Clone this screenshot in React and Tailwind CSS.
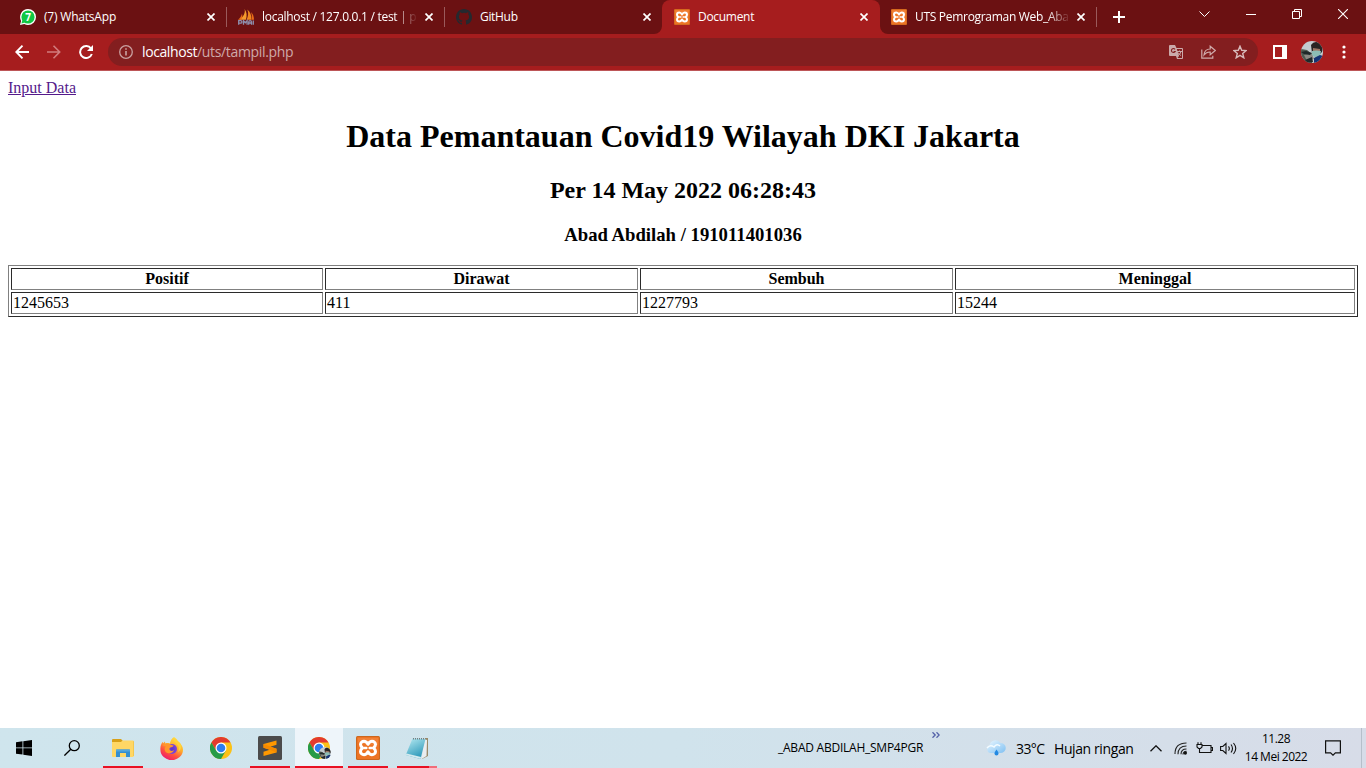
import React from "react";

const ui = "font-['Open_Sans','Noto_Sans',sans-serif]";

function Close() {
  return (
    <svg className="size-2 shrink-0" viewBox="0 0 8 8" fill="none" stroke="#fff" strokeWidth="1.7">
      <path d="M.5 .5l7 7M7.5 .5l-7 7" />
    </svg>
  );
}

function WhatsApp() {
  return (
    <svg className="size-4 shrink-0" viewBox="0 0 16 16">
      <path d="M8 0a8 8 0 0 1 0 16a8 8 0 0 1-3.7-.9L0 16l1.1-4.1A8 8 0 0 1 8 0z" fill="#fff" />
      <circle cx="8" cy="8" r="6.6" fill="#10c843" />
      <path d="M1.4 14.6l1-3.5 2.5 2.5z" fill="#10c843" />
      <text x="8" y="11.6" fontSize="10" fontWeight="700" textAnchor="middle" fill="#fff" fontFamily="Open Sans, sans-serif">7</text>
    </svg>
  );
}

function PhpMyAdmin() {
  return (
    <svg className="size-4 shrink-0" viewBox="0 0 16 16">
      <path d="M6.600 0C7.500 4 5.500 7.500 1.500 10.800H7.800C9.300 7 8.800 3 6.600 0z" fill="#f59b2c" />
      <path d="M9.300 .5c1.500 3.500.9 6.800-.8 10.300H13.200C13.800 6.500 12.300 3 9.300.5z" fill="#ef8820" />
      <path d="M12.800 3c1.300 2.400 1.200 5 .5 7.800H16c0-3-1-6.300-3.200-7.800zM4 4.500C3.500 7 2 9.500 0 10.800h2.800C4.300 9 4.700 7 4 4.500z" fill="#e96b18" />
      <path d="M.7 15.700v-4h2q1.200 0 1.200 1.200T2.700 14.200H1M5.500 15.700v-4l1.800 2 1.800-2v4M10.700 15.700v-2.500q0-1.500 1.400-1.500t1.400 1.500v2.500M10.700 14h2.800M15.300 11.500v4.200" fill="none" stroke="#8e90ae" strokeWidth="1.300" />
    </svg>
  );
}

function GitHub() {
  return (
    <svg className="size-4 shrink-0" viewBox="0 0 16 16" fill="#24292f">
      <path d="M8 0C3.580 0 0 3.580 0 8c0 3.540 2.290 6.530 5.470 7.590.4.070.550-.170.550-.380 0-.190-.010-.820-.010-1.490-2.010.370-2.530-.490-2.690-.940-.090-.230-.480-.940-.820-1.130-.280-.150-.680-.520-.010-.530.630-.010 1.080.580 1.230.820.720 1.210 1.870.870 2.330.660.070-.520.280-.870.510-1.070-1.780-.2-3.640-.890-3.640-3.950 0-.870.310-1.590.820-2.150-.080-.2-.360-1.020.080-2.120 0 0 .670-.210 2.200.820a7.600 7.600 0 0 1 4 0c1.530-1.040 2.200-.820 2.200-.820.440 1.100.160 1.920.080 2.120.510.560.820 1.270.820 2.150 0 3.070-1.870 3.750-3.650 3.950.290.250.540.730.540 1.480 0 1.070-.010 1.930-.010 2.200 0 .210.150.460.550.380A8.010 8.010 0 0 0 16 8c0-4.420-3.580-8-8-8z" />
    </svg>
  );
}

function Xampp({ size = "size-4" }) {
  return (
    <svg className={`${size} shrink-0`} viewBox="0 0 24 24">
      <rect width="24" height="24" rx="1.500" fill="#cc671d" />
      <rect x="1" y="1" width="22" height="22" rx="1" fill="#ed7424" />
      <path d="M2 2h20v7Q12 10 2 6z" fill="#f48a43" opacity=".6" />
      <g fill="none" stroke="#fff" strokeWidth="3" strokeLinejoin="round" strokeLinecap="round">
        <path d="M12 8.300C10.700 6 9.500 5.300 8 5.300c-2 0-3.500 1.400-3.500 3.300 0 1.500.9 2.500 2.100 3.400-1.200.9-2.100 1.900-2.100 3.400 0 1.900 1.500 3.300 3.500 3.300 1.500 0 2.700-.7 4-3 1.300 2.300 2.500 3 4 3 2 0 3.500-1.400 3.500-3.300 0-1.500-.9-2.500-2.100-3.400 1.200-.9 2.100-1.900 2.100-3.400 0-1.900-1.500-3.300-3.500-3.300-1.500 0-2.700.7-4 3z" />
        <path d="M8.500 12h1.800M13.700 12h1.800" strokeWidth="2.500" />
      </g>
    </svg>
  );
}

function Tab({ icon, children, active, sep, fade, tracking = "tracking-[-0.3px]", width = "w-[218px]", pad = "pl-3", closeGap = "ml-2" }) {
  return (
    <div className={`relative flex h-[34px] shrink-0 items-center ${pad} ${width} ${active ? "rounded-t-lg bg-[#a61d1e]" : ""}`}>
      {icon}
      <div className={`ml-2 w-[155px] shrink-0 overflow-hidden whitespace-nowrap text-[12px] leading-5 text-white ${tracking} ${fade ? "[mask-image:linear-gradient(to_right,#000_132px,transparent_156px)]" : ""}`}>
        {children}
      </div>
      <div className={`flex ${closeGap}`}><Close /></div>
      {sep && <div className={`absolute top-[7px] h-5 w-px bg-[#9a5a5b] ${width === "w-[217px]" ? "right-0" : "right-[-1px]"}`} />}
      {active && (
        <>
          <svg className="absolute bottom-0 -left-2 size-2" viewBox="0 0 8 8"><path d="M8 0v8H0a8 8 0 0 0 8-8z" fill="#a61d1e" /></svg>
          <svg className="absolute bottom-0 -right-2 size-2" viewBox="0 0 8 8"><path d="M0 0v8h8a8 8 0 0 1-8-8z" fill="#a61d1e" /></svg>
        </>
      )}
    </div>
  );
}

function Avatar({ className }) {
  return (
    <svg className={className} viewBox="0 0 22 22">
      <defs><clipPath id="avatar"><circle cx="11" cy="11" r="11" /></clipPath></defs>
      <g clipPath="url(#avatar)">
        <path fill="#c3ccd0" d="M0 0h22v22H0z" />
        <path fill="#4f594f" d="M0 8l6 1 5 4v9H0z" />
        <path fill="#8b8983" d="M3 14l8-2 2 6-7 2z" />
        <path fill="#282323" d="M10 4q3-5 9-2 4 3 2 9l-3 3-7-2z" />
        <path fill="#9d7564" d="M12 7l7 1v5l-7 1z" />
        <path fill="#8cbdb5" d="M11 10q4-1 9 0l-1 5-4 2-4-3z" />
        <path fill="#153474" d="M13 17l6-3 3 1v7h-9z" />
        <path fill="#202829" d="M0 11l5-1 6 2-2 2-6-1zM4 19l7-3 1 5-6 1z" />
      </g>
    </svg>
  );
}

function Chrome() {
  return (
    <svg className="size-[22px]" viewBox="0 0 22 22">
      <circle cx="11" cy="11" r="11" fill="#fbc116" />
      <path d="M11 5.500h9.530A11 11 0 0 0 1.470 5.500L6.200 13.700z" fill="#e33b2e" />
      <path d="M1.470 5.500A11 11 0 0 0 11 22l4.760-8.250L11 11l-4.760 2.750z" fill="#269b48" />
      <circle cx="11" cy="11" r="5.500" fill="#fff" />
      <circle cx="11" cy="11" r="4.300" fill="#2d7df0" />
    </svg>
  );
}

function Firefox() {
  return (
    <svg className="size-[23px]" viewBox="0 0 23 23">
      <defs>
        <linearGradient id="fire" x1=".8" y1="0" x2=".25" y2="1">
          <stop offset="0" stopColor="#ffe84a" /><stop offset=".4" stopColor="#ffb02c" />
          <stop offset=".7" stopColor="#ff5040" /><stop offset="1" stopColor="#ec1670" />
        </linearGradient>
        <radialGradient id="globe"><stop offset="0" stopColor="#5b35c8" /><stop offset="1" stopColor="#8046d9" /></radialGradient>
      </defs>
      <path d="M14 0c2 1 3.500 3 4 4.500l1.500 1.200c2 1.800 3.500 4.500 3.500 7A11.300 10.500 0 0 1 .4 12.700C.2 9.500 1 7 2.700 4.800l.4 1.500L5 4.500l.3 2c1.600-.6 3.100-.6 4.600 0C10.500 3.800 11.500 1.500 14 0z" fill="url(#fire)" />
      <circle cx="12" cy="12" r="5" fill="url(#globe)" />
      <path d="M2.500 8.300c3-2.500 6.500-1.500 8.300-.5 1 .5 2 .5 2.700.6-.5 1.600-2 1.500-3.200 2.200-.8.500-1 1.200-.8 2 .6 1.600 2.500 1.700 4.600.4-1.500 4-7 4.200-8.900 1.200C4 12.300 5 10 6 9.500z" fill="#ff972b" />
      <path d="M13.500 1.500c-.5 3 3.500 4.500 4.800 7.500 1 2.500.6 5-.5 6.500 5-3.500 3.800-8.500 1-10.700z" fill="#ffd43a" />
    </svg>
  );
}

function Task({ children, width = "w-[49px]", line, active }) {
  return (
    <div className={`relative flex h-10 shrink-0 items-center justify-center ${width} ${active ? "bg-[#eef5fa]" : ""}`}>
      {children}
      {line && <div className={`absolute bottom-0 h-0.5 bg-[#e81123] ${active ? "w-full" : "w-10"}`} />}
    </div>
  );
}

function Browser() {
  return (
    <header className="shrink-0">
      <div className="flex h-[34px] bg-[#6b1112] pl-2">
        <Tab icon={<WhatsApp />} sep tracking="tracking-[-0.2px]">(7) WhatsApp</Tab>
        <Tab icon={<PhpMyAdmin />} sep fade tracking="tracking-[-0.28px]">localhost / 127.0.0.1 / test | ph</Tab>
        <Tab icon={<GitHub />} tracking="tracking-[-0.32px]">GitHub</Tab>
        <Tab icon={<Xampp />} active closeGap="ml-[7px]">Document</Tab>
        <Tab icon={<Xampp />} sep fade width="w-[217px]" pad="pl-[11px]" closeGap="ml-[7px]">UTS Pemrograman Web_Aba</Tab>
        <svg className="ml-4 mt-[11px] size-3 shrink-0" viewBox="0 0 12 12" stroke="#fff" strokeWidth="2"><path d="M6 0v12M0 6h12" /></svg>
        <div className="ml-auto flex h-[28px] items-center pr-[18px]">
          <svg className="mr-[36px] h-[6px] w-[11px]" viewBox="0 0 11 6" fill="none" stroke="#fff"><path d="M.5 .5l5 5 5-5" /></svg>
          <svg className="mr-[36px] h-px w-[10px]" viewBox="0 0 10 1"><path fill="#fff" d="M0 0h10v1H0z" /></svg>
          <svg className="mr-[36px] size-[10px]" viewBox="0 0 10 10" fill="none" stroke="#fff"><path d="M.5 2.500h7v7h-7zM2.500 2.500v-2h7v7h-2" /></svg>
          <svg className="size-[10px]" viewBox="0 0 10 10" fill="none" stroke="#fff" strokeWidth="1.100"><path d="M0 0l10 10M10 0L0 10" /></svg>
        </div>
      </div>
      <div className="flex h-[37px] items-center border-b border-[#bd5658] bg-[#a61d1e] pl-[15px]">
        <svg className="h-[14px] w-[14px]" viewBox="0 0 14 14" fill="none" stroke="#fff" strokeWidth="1.900"><path d="M14 7H1.500M7.500 .7L1.300 7l6.200 6.300" /></svg>
        <svg className="ml-[18px] h-[14px] w-[14px]" viewBox="0 0 14 14" fill="none" stroke="#d17c7d" strokeWidth="1.600"><path d="M0 7h12.500M6.500 .7L12.700 7l-6.200 6.300" /></svg>
        <svg className="ml-[18px] size-[14px]" viewBox="0 0 14 14"><path d="M12 3.500A6 6 0 1 0 12.800 9" fill="none" stroke="#fff" strokeWidth="2" /><path d="M14 0v6H8z" fill="#fff" /></svg>
        <div className="ml-[15px] flex h-7 w-[1150px] items-center rounded-full bg-[#831e1f] pl-[11px] pr-[11px]">
          <svg className="size-[14px]" viewBox="0 0 14 14"><circle cx="7" cy="7" r="6.300" fill="none" stroke="#c9a0a0" strokeWidth="1.300" /><path d="M6.300 6h1.400v4.500H6.300zM6.300 3.300h1.400v1.400H6.300z" fill="#d5b4b4" /></svg>
          <span className="ml-[9px] text-[14px] leading-5 tracking-[-0.4px] text-white">localhost<span className="tracking-[-0.34px] text-[#cfa9a9]">/uts/tampil.php</span></span>
          <svg className="ml-auto h-[14px] w-[14px]" viewBox="0 0 14 14">
            <path d="M1 0h5l1.500 3H13q1 0 1 1v9q0 1-1 1H8l-1-3H1q-1 0-1-1V1q0-1 1-1z" fill="#cbaaaa" />
            <path d="M7.800 4H13v9H8.500L10 11z" fill="#831e1f" />
            <path d="M6 4.300a2 2 0 1 0 .2 2.200H4.600" fill="none" stroke="#831e1f" strokeWidth="1.100" />
            <path d="M8 6.500h5M10.500 5.500v1M12 6.500q-.8 3-3 4M9 7.500q1.500 2.500 3 3" fill="none" stroke="#cbaaaa" />
          </svg>
          <svg className="ml-[18px] h-[14px] w-[15px]" viewBox="0 0 15 14" fill="none" stroke="#d0aaaa" strokeWidth="1.200"><path d="M.8 4.500v8.700h11v-2.500M3 10Q3.500 4 9.200 4V1.200L14.300 5.500 9.200 9.800V7Q5.500 6.800 3 10z" /></svg>
          <svg className="ml-[17px] size-[14px]" viewBox="0 0 14 14" fill="none" stroke="#d8baba" strokeWidth="1.400"><path d="M7 1.200l1.700 4.100 4.400.3-3.400 2.900 1.100 4.300L7 10.400l-3.800 2.400 1.100-4.300L.9 5.600l4.400-.3z" /></svg>
        </div>
        <svg className="ml-[15px] h-[14px] w-[14px]" viewBox="0 0 14 14"><path fill="#fff" fillRule="evenodd" d="M0 0h14v14H0zM2 2v10h7V2z" /></svg>
        <Avatar className="ml-[14px] size-[22px]" />
        <svg className="ml-[19px] h-[14px] w-[4px]" viewBox="0 0 4 14" fill="#fff"><circle cx="2" cy="2" r="1.600" /><circle cx="2" cy="7" r="1.600" /><circle cx="2" cy="12" r="1.600" /></svg>
      </div>
    </header>
  );
}

function Page() {
  const cell = "h-[22px] border border-t-[#2b2b2b] border-l-[#2b2b2b] border-r-[#808080] border-b-[#808080] p-px leading-[18px]";
  return (
    <main className="flex-1 bg-white px-2 pt-2 font-['Liberation_Serif','Times_New_Roman',serif] text-[16px] leading-[18px] text-black">
      <a href="#" className="block w-fit text-[#551a8b] underline">Input Data</a>
      <h1 className="mt-[21px] text-center text-[32px] font-bold leading-[37px]">Data Pemantauan Covid19 Wilayah DKI Jakarta</h1>
      <h2 className="mt-[22px] text-center text-[24px] font-bold leading-[27px]">Per 14 May 2022 06:28:43</h2>
      <h3 className="mt-[20px] text-center text-[18.72px] font-bold leading-[21px]">Abad Abdilah / 191011401036</h3>
      <table className="mt-[20px] w-full table-fixed border-separate border-spacing-[2px] border border-t-[#808080] border-l-[#808080] border-r-[#2b2b2b] border-b-[#2b2b2b]">
        <colgroup>
          <col className="w-[312px]" /><col className="w-[313px]" /><col className="w-[313px]" /><col className="w-[400px]" />
        </colgroup>
        <thead><tr>{["Positif", "Dirawat", "Sembuh", "Meninggal"].map((t) => <th key={t} className={`${cell} text-center font-bold`}>{t}</th>)}</tr></thead>
        <tbody><tr>{["1245653", "411", "1227793", "15244"].map((t) => <td key={t} className={cell}>{t}</td>)}</tr></tbody>
      </table>
    </main>
  );
}

function Taskbar() {
  return (
    <footer className="flex h-10 shrink-0 items-center bg-linear-to-r from-[#cfe5ed] via-[#d0e3ec] to-[#d7dce8] text-black">
      <Task width="w-[48px]">
        <svg className="size-4" viewBox="0 0 16 16"><path d="M0 2.200l6.500-.9v6.200H0zM7.300 1.200L16 0v7.500H7.300zM0 8.300h6.500v6.300L0 13.700zM7.300 8.300H16V16l-8.700-1.200z" /></svg>
      </Task>
      <Task width="w-[48px]">
        <svg className="size-4" viewBox="0 0 16 16" fill="none" stroke="#000" strokeWidth="1.300"><circle cx="10.300" cy="5.700" r="5" /><path d="M6.800 9.200L.4 15.600" /></svg>
      </Task>
      <Task width="w-[53px]" line>
        <svg className="h-[18px] w-[22px]" viewBox="0 0 22 18">
          <path d="M0 1q0-1 1-1h8l2 2h10q1 0 1 1v14H0z" fill="#d8a018" /><path d="M0 3h9l1.500-1.500H21q.700 0 .7 1V17q0 1-1 1H1q-1 0-1-1z" fill="#ffd765" />
          <path d="M4 18v-6.500q0-1 1-1h12q1 0 1 1V18h-4v-4H8v4z" fill="#348fd0" /><path d="M4 10.500h14v2H4z" fill="#53a6dc" />
        </svg>
      </Task>
      <Task width="w-[45px]"><Firefox /></Task>
      <Task width="w-[53px]"><Chrome /></Task>
      <Task width="w-[46px]" line>
        <svg className="size-6" viewBox="0 0 24 24"><rect width="24" height="24" rx="1.500" fill="#4b4b4b" /><path d="M18.500 4.500v4.200L12.300 10.800l6.200 2v3.700L5.500 20v-4.200l6.200-2.100-6.200-2V8z" fill="#ff9800" /><path d="M5.500 11.700V8l13 4.800v3.700l-6.800-2.800z" fill="#f58a00" /></svg>
      </Task>
      <div className="ml-[2px]">
        <Task width="w-[48px]" line active>
          <Chrome />
          <Avatar className="absolute left-[24px] top-[19px] size-3" />
        </Task>
      </div>
      <Task width="w-[50px]" line><Xampp size="size-6" /></Task>
      <div className="relative flex h-10 w-12 items-center justify-center">
        <svg className="h-[23px] w-6" viewBox="0 0 24 23">
          <defs><linearGradient id="note" x1="0" y1="0" x2=".5" y2="1"><stop stopColor="#b9ecf3" /><stop offset="1" stopColor="#2e99ba" /></linearGradient></defs>
          <path d="M20 1h3v18l-6 3z" fill="#998968" /><path d="M19 2l3 1-.5 16-5 3z" fill="#e9edf0" />
          <path d="M7.500 1.500L20.500 2 15.500 22 .8 18z" fill="url(#note)" /><path d="M.8 18L15.500 22l.6-2L1.500 16.400z" fill="#d4e9ee" />
          <path d="M8 1.700h12.300" stroke="#777e80" strokeDasharray="1 1" strokeWidth="1.500" />
        </svg>
        <div className="absolute bottom-0 left-[4px] flex h-0.5 w-10"><div className="w-8 bg-[#e81123]" /><div className="w-2 bg-[#f16c79]" /></div>
      </div>
      <span className="ml-[337px] w-[146px] whitespace-nowrap text-[12px] tracking-[-0.24px]">_ABAD ABDILAH_SMP4PGR</span>
      <svg className="ml-[8px] mb-[26px] h-[6px] w-[8px] shrink-0" viewBox="0 0 8 6" fill="none" stroke="#5360a8" strokeWidth="1.300"><path d="M.5 .3L3.200 3 .5 5.700M4.500 .3L7.200 3 4.500 5.700" /></svg>
      <svg className="ml-[46px] h-4 w-5 shrink-0" viewBox="0 0 20 16">
        <defs><linearGradient id="cloud" x1="0" y1="0" x2="1" y2="1"><stop stopColor="#eaf7ff" /><stop offset="1" stopColor="#7fc0f2" /></linearGradient></defs>
        <path d="M4 13a4 4 0 0 1-.5-7.500A6 6 0 0 1 14.500 3a5 5 0 0 1 .5 10z" fill="url(#cloud)" /><path d="M1 8q3-4 7-1 3-4 6-1" fill="none" stroke="#f3fbff" strokeWidth="1.500" />
        <path d="M10.500 9.500q2 2.500 2 4a2 2 0 0 1-4 0q0-1.500 2-4z" fill="#2389e2" />
      </svg>
      <span className="ml-[10px] w-[30px] whitespace-nowrap text-[14px] tracking-[-0.6px]">33°C</span>
      <span className="ml-[8px] w-[80px] whitespace-nowrap text-[14px] tracking-[-0.4px]">Hujan ringan</span>
      <svg className="ml-[16px] h-[7px] w-[12px] shrink-0" viewBox="0 0 12 7" fill="none" stroke="#111" strokeWidth="1.300"><path d="M.5 6.300L6 .8l5.500 5.500" /></svg>
      <svg className="ml-[12px] h-[13px] w-[14px] shrink-0" viewBox="0 0 14 13" fill="none" stroke="#222" strokeWidth="1.100"><path d="M1 12Q1 1 12.500 1M4 12.300Q4 4 12.500 4M7 12.300Q7 7 12.500 7" /><circle cx="11.300" cy="11" r="1.700" fill="#111" stroke="none" /><path d="M9 12.500q0-3 3.500-3.300" /></svg>
      <svg className="ml-[8px] mb-px h-[12px] w-[17px] shrink-0" viewBox="0 0 17 12" fill="none" stroke="#111" strokeWidth="1.100"><path d="M6.500 3.500h8.500v7H5M15.500 5.500h1v3h-1M1 2.500h5V5L4.500 6.500h-2L1 5zM2 .3v2M5 .3v2M3.500 6.500v4H5" /></svg>
      <svg className="ml-[7px] h-[13px] w-[17px] shrink-0" viewBox="0 0 17 13" fill="none" stroke="#111" strokeWidth="1.100"><path d="M.6 4.500h2.200L6 1.500v10L2.800 8.500H.6zM8.500 4.300q1.700 2.200 0 4.400M11 2.500q3 4 0 8M13.500 1q4.500 5.500 0 11" /></svg>
      <div className="ml-[6px] flex w-[66px] shrink-0 flex-col items-center whitespace-nowrap text-[12px] leading-[18px] tracking-[-0.5px]">
        <span>11.28</span><span>14 Mei 2022</span>
      </div>
      <svg className="ml-[16px] h-[16px] w-[16px] shrink-0" viewBox="0 0 16 16" fill="none" stroke="#111" strokeWidth="1.200"><path d="M.6 .8h14.800v12h-5L8 15.200l-2.400-2.400h-5z" /></svg>
      <div className="ml-auto mr-[4px] h-10 w-px bg-[#b6bfca]" />
    </footer>
  );
}

export default function App() {
  return (
    <div className={`flex h-screen w-full flex-col overflow-hidden bg-white ${ui}`}>
      <Browser />
      <Page />
      <Taskbar />
    </div>
  );
}
